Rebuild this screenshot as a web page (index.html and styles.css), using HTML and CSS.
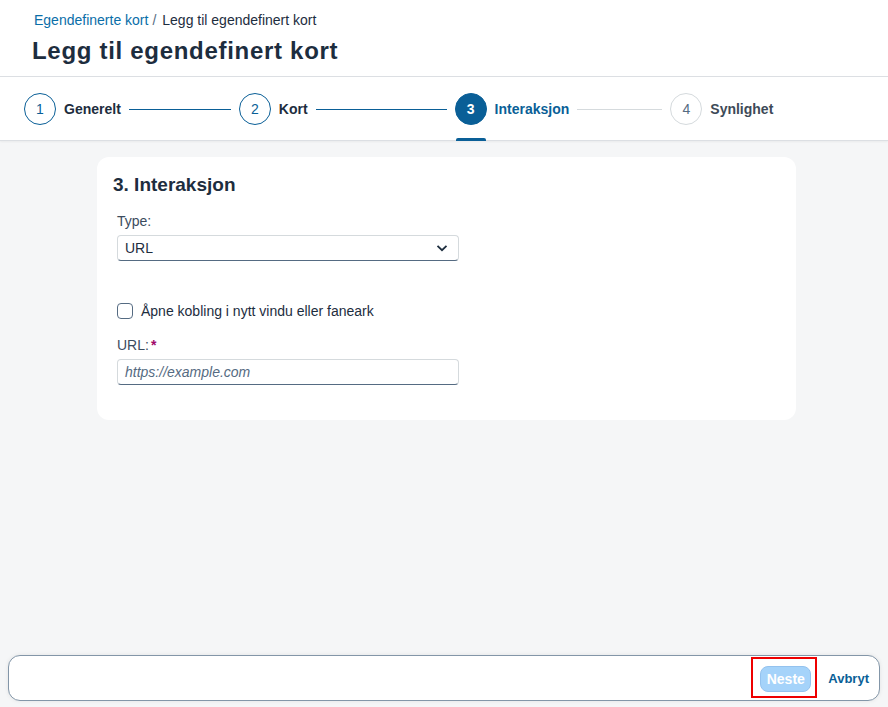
FILE: index.html
```html
<!DOCTYPE html>
<html lang="no">
<head>
<meta charset="utf-8">
<title>Legg til egendefinert kort</title>
<link rel="stylesheet" href="styles.css">
</head>
<body>
<div class="Header">
    <div class="Crumbs"><a href="#">Egendefinerte kort</a><span class="Sep">/</span><span>Legg til egendefinert kort</span></div>
    <h1 class="PageTitle">Legg til egendefinert kort</h1>
</div>

<div class="Steps">
    <div class="Step done"><span class="Num">1</span><span class="Name">Generelt</span></div>
    <div class="Line done"></div>
    <div class="Step done"><span class="Num">2</span><span class="Name">Kort</span></div>
    <div class="Line done"></div>
    <div class="Step active"><span class="Num">3</span><span class="Name">Interaksjon</span></div>
    <div class="Line"></div>
    <div class="Step"><span class="Num">4</span><span class="Name">Synlighet</span></div>
</div>

<div class="Main">
    <div class="Card">
        <h2 class="CardTitle">3. Interaksjon</h2>
        <label class="Label">Type:</label>
        <div class="Select">
            <span>URL</span>
            <svg width="14" height="14" viewBox="0 0 14 14"><path d="M2.5 4.8 L7 9.2 L11.5 4.8" fill="none" stroke="#1d2d3e" stroke-width="1.8"/></svg>
        </div>
        <div class="Check"><span class="Box"></span><span>Åpne kobling i nytt vindu eller faneark</span></div>
        <label class="Label">URL:<span class="Req">*</span></label>
        <div class="Input">https://example.com</div>
    </div>
</div>

<div class="Footer">
    <div class="Mark"><button class="Next">Neste</button></div>
    <button class="Cancel">Avbryt</button>
</div>
</body>
</html>
```

FILE: styles.css
```css
body { margin: 0; width: 888px; height: 707px; background: #f5f6f7; font-family: "Liberation Sans", Arial, sans-serif; color: #1d2d3e; display: flex; flex-direction: column; overflow: hidden; }
.Header { background: #fff; padding: 12px 32px 12px; border-bottom: 1px solid #dcdfe3; height: 52px; }
.Crumbs { font-size: 14px; padding-left: 2px; line-height: 16px; }
.Crumbs a { color: #0a6ea8; text-decoration: none; }
.Crumbs .Sep { margin: 0 6px 0 4px; color: #556b82; }
.PageTitle { margin: 9px 0 0; font-size: 24px; font-weight: 900; line-height: 28px; letter-spacing: 0.7px; }
.Steps { background: #fff; height: 62px; padding-top: 1px; display: flex; align-items: center; padding-left: 24px; border-bottom: 1px solid #dcdfe3; box-shadow: 0 1px 2px rgba(0,0,0,0.05); }
.Step { display: flex; align-items: center; position: relative; height: 62px; }
.Num { width: 30px; height: 30px; border: 1px solid #0a5f97; border-radius: 50%; display: flex; align-items: center; justify-content: center; font-size: 14px; color: #0a5f97; }
.Name { margin-left: 8px; font-size: 14px; font-weight: bold; color: #1d2d3e; }
.Step.active .Num { background: #0a5f97; color: #fff; font-weight: bold; }
.Step.active .Name { color: #0a5f97; }
.Step.active::after { content: ""; position: absolute; left: 1px; bottom: -1px; width: 30px; height: 3px; background: #0a5f97; border-radius: 2px 2px 0 0; }
.Step:last-child .Num { border-color: #d5dadd; color: #556b82; }
.Step:last-child .Name { color: #3d4a57; }
.Line { flex: 0 0 102px; height: 1px; background: #0a5f97; margin: 0 8px; }
.Step:nth-child(3) + .Line { flex-basis: 131px; }
.Line:not(.done) { flex-basis: 85px; background: #d5dadd; }
.Main { flex: 1; padding: 16px 92px 0 97px; }
.Card { background: #fff; border-radius: 12px; padding: 16px 16px 35px 16px; width: 667px; }
.CardTitle { margin: 0 0 16px; font-size: 19px; font-weight: bold; line-height: 24px; }
.Label { display: block; font-size: 14px; margin: 0 0 6px 4px; line-height: 16px; color: #3c4c5e; }
.Req { color: #a1096a; font-weight: bold; margin-left: 2px; }
.Select, .Input { margin-left: 4px; width: 325px; height: 24px; border: 1px solid #d5dadd; border-bottom-color: #556b82; border-radius: 4px; display: flex; align-items: center; justify-content: space-between; padding: 0 8px 0 7px; font-size: 14px; }
.Select svg { margin-right: 1px; }
.Check { display: flex; align-items: center; margin: 42px 0 18px 4px; font-size: 14px; }
.Box { width: 14px; height: 14px; border: 1px solid #556b82; border-radius: 4px; margin-right: 8px; }
.Input { color: #556b82; font-style: italic; justify-content: flex-start; }
.Footer { margin: 0 8px 6px; height: 44px; background: #fff; border: 1px solid #8396a8; border-radius: 12px; display: flex; align-items: center; justify-content: flex-end; padding-right: 10px; box-shadow: 0 0 4px rgba(0,0,0,0.08); }
.Mark { border: 2px solid #e00; padding: 7px 4px 4px 7px; margin: 1px 11px 0 0; align-self: flex-start; }
.Next { display: block; font-family: inherit; font-size: 14px; font-weight: bold; color: #fff; background: #a5d3fa; border: 1px solid #94c2ee; border-radius: 8px; height: 26px; width: 51px; padding: 0; }
.Cancel { font-family: inherit; font-size: 13px; font-weight: bold; color: #0a5f97; background: none; border: none; padding: 0; }
```
